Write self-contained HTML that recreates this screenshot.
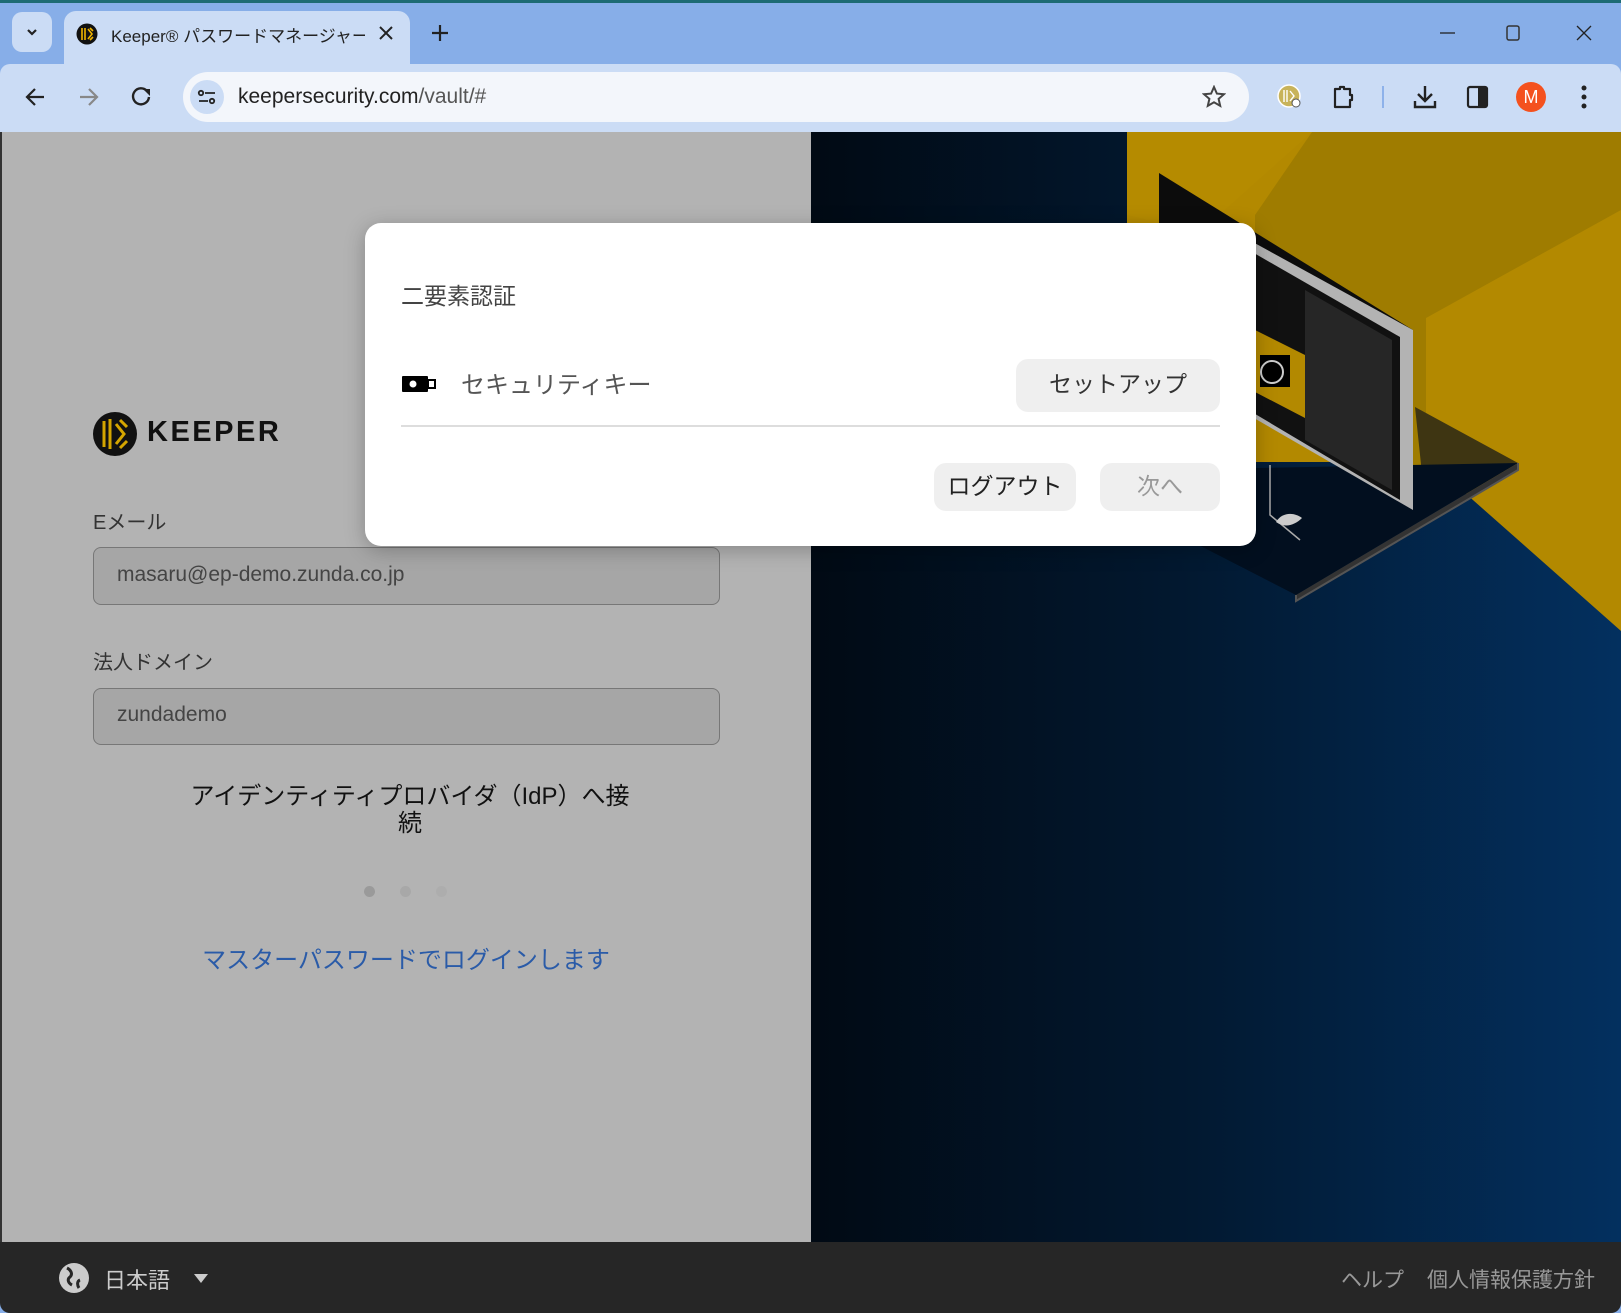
<!DOCTYPE html>
<html><head><meta charset="utf-8"><style>
*{margin:0;padding:0;box-sizing:border-box}
body{width:1621px;height:1313px;overflow:hidden;background:#87aee8;font-family:"Liberation Sans","Noto Sans CJK JP",sans-serif;position:relative}
.abs{position:absolute}
.jp{font-family:"Liberation Sans","Noto Sans CJK JP",sans-serif}
</style></head><body>
<!-- tab bar -->
<div class="abs" style="left:0;top:0;width:1621px;height:3px;background:#1d6b73"></div>
<div class="abs" style="left:0;top:3px;width:1621px;height:61px;background:#87aee8"></div>
<div class="abs" style="left:12px;top:12px;width:40px;height:40px;border-radius:10px;background:#cbdcf5"></div>
<svg class="abs" style="left:24px;top:24px" width="16" height="16"><path d="M4 6l4 4 4-4" stroke="#222" stroke-width="2.2" fill="none"/></svg>
<div class="abs" style="left:64px;top:11px;width:346px;height:60px;border-radius:12px 12px 0 0;background:#cbdcf5"></div>
<svg class="abs" style="left:76px;top:23px" width="22" height="22"><circle cx="11" cy="11" r="10.5" fill="#111"/><path d="M6 5v12M9 5v12M12 6l4 5-4 5M14 5l3 3M14 17l3-3" stroke="#f0b400" stroke-width="1.6" fill="none"/></svg>
<div class="abs jp" style="left:111px;top:22px;font-size:17px;color:#222;white-space:nowrap;width:254px;overflow:hidden">Keeper® パスワードマネージャー &amp; デ</div>
<svg class="abs" style="left:378px;top:25px" width="16" height="16"><path d="M2 2l12 12M14 2L2 14" stroke="#222" stroke-width="2"/></svg>
<svg class="abs" style="left:431px;top:24px" width="18" height="18"><path d="M9 1v16M1 9h16" stroke="#222" stroke-width="2.2"/></svg>
<svg class="abs" style="left:1440px;top:22px" width="160" height="22"><path d="M0 11h15" stroke="#222" stroke-width="1.3"/><rect x="67" y="4" width="12" height="14" rx="2" stroke="#333" stroke-width="1.5" fill="none"/><path d="M137 4l14 14M151 4l-14 14" stroke="#222" stroke-width="1.3"/></svg>
<!-- toolbar -->
<div class="abs" style="left:0;top:64px;width:1621px;height:68px;background:#cbdcf5;border-radius:10px 10px 0 0"></div>
<svg class="abs" style="left:24px;top:85px" width="140" height="24"><path d="M20 12H4M11 4l-8 8 8 8" stroke="#222" stroke-width="2.2" fill="none"/><path d="M56 12h16M65 4l8 8-8 8" stroke="#888" stroke-width="2.2" fill="none"/><path d="M123 6a8 8 0 1 0 2 6" stroke="#222" stroke-width="2.4" fill="none"/><path d="M119 4h7v7z" fill="#222"/></svg>
<div class="abs" style="left:183px;top:72px;width:1066px;height:50px;border-radius:25px;background:#f3f6fb"></div>
<div class="abs" style="left:190px;top:80px;width:34px;height:34px;border-radius:17px;background:#cbdcf5"></div>
<svg class="abs" style="left:197px;top:87px" width="20" height="20"><circle cx="4" cy="6" r="2.2" stroke="#222" stroke-width="1.8" fill="none"/><path d="M8 6h10M2 14h9" stroke="#222" stroke-width="1.8"/><circle cx="15" cy="14" r="2.2" stroke="#222" stroke-width="1.8" fill="none"/></svg>
<div class="abs" style="left:238px;top:85px;font-size:21px;color:#222">keepersecurity.com<span style="color:#555">/vault/#</span></div>
<svg class="abs" style="left:1202px;top:85px" width="24" height="24"><path d="M12 2l2.9 6.6 7.1.6-5.4 4.7 1.6 7L12 17.3 5.8 20.9l1.6-7L2 9.2l7.1-.6z" stroke="#444" stroke-width="2" fill="none"/></svg>
<svg class="abs" style="left:1277px;top:84px" width="26" height="26"><circle cx="12" cy="12" r="11" fill="#c8b35a" stroke="#fff" stroke-width="1.5"/><path d="M7 6v12M10 6v12M13 7l4 5-4 5" stroke="#fff" stroke-width="1.4" fill="none"/><circle cx="19" cy="19" r="4" fill="#fff" stroke="#555"/></svg>
<svg class="abs" style="left:1331px;top:84px" width="26" height="26"><path d="M4 5h5V3h4v2h6v6h2v5h-2v7H4z" stroke="#222" stroke-width="2.2" fill="none" stroke-linejoin="round"/></svg>
<div class="abs" style="left:1382px;top:86px;width:2px;height:22px;background:#8eb2ea"></div>
<svg class="abs" style="left:1412px;top:84px" width="26" height="26"><path d="M13 2v14M6 10l7 7 7-7M3 17v6h20v-6" stroke="#222" stroke-width="2.4" fill="none"/></svg>
<svg class="abs" style="left:1466px;top:85px" width="24" height="24"><rect x="2" y="2" width="19" height="20" rx="2" stroke="#222" stroke-width="2.2" fill="none"/><rect x="12" y="2" width="9" height="20" fill="#222"/></svg>
<div class="abs" style="left:1516px;top:82px;width:30px;height:30px;border-radius:15px;background:#f4511e;color:#fff;font-size:18px;text-align:center;line-height:30px">M</div>
<svg class="abs" style="left:1580px;top:84px" width="8" height="26"><circle cx="4" cy="4" r="2.5" fill="#222"/><circle cx="4" cy="13" r="2.5" fill="#222"/><circle cx="4" cy="22" r="2.5" fill="#222"/></svg>
<!-- content -->
<div class="abs" style="left:0;top:132px;width:811px;height:1110px;background:#b3b3b3;border-left:2px solid #333"></div>
<div class="abs" style="left:811px;top:132px;width:810px;height:1110px;background:linear-gradient(90deg,#010a14 0%,#02182f 45%,#03305f 100%)"></div>
<svg class="abs" style="left:811px;top:132px" width="810" height="1110" viewBox="811 132 810 1110">
<polygon points="1127,132 1621,132 1621,631 1430,462 1127,462" fill="#b38900"/>
<polygon points="1312,132 1621,132 1621,210 1426,318 1426,480 1255,352 1255,215" fill="#9f7c00"/>
<polygon points="1127,132 1312,132 1200,232 1127,215" fill="#b58b00"/>
<polygon points="1415,407 1518,463 1426,512" fill="#3e3512"/>
<polygon points="1150,470 1518,463 1296,595 1150,520" fill="#020f1f"/>
<polyline points="1518,463 1518,470 1296,601 1296,595" fill="#333" stroke="#555" stroke-width="2"/>
<polygon points="1159,173 1413,330 1413,510 1159,362" fill="#0c0c0c"/>
<polygon points="1240,235 1413,330 1413,510 1240,410" fill="#b3b3b3"/>
<polygon points="1240,245 1400,337 1400,500 1240,405" fill="#111"/>
<polygon points="1305,290 1392,340 1392,490 1305,440" fill="#262626"/>
<polygon points="1255,330 1305,355 1305,418 1255,392" fill="#b38900"/>
<rect x="1260" y="355" width="30" height="32" fill="#000"/>
<circle cx="1272" cy="372" r="11" fill="#000" stroke="#ccc" stroke-width="2"/>
<path d="M1270 465v50l30 25" stroke="#aaa" stroke-width="1.5" fill="none"/>
<path d="M1276 522c6-10 18-10 26-4c-8 8-18 10-26 4z" fill="#ccc"/>
</svg>
<!-- left panel content -->
<svg class="abs" style="left:93px;top:412px" width="44" height="44"><circle cx="22" cy="22" r="22" fill="#111"/><path d="M11 9v26M17 7v30M23 12l8 10-8 10M27 8l7 7M27 36l7-7" stroke="#d4a500" stroke-width="3" fill="none"/></svg>
<div class="abs" style="left:147px;top:416px;font-size:29px;font-weight:bold;color:#111;letter-spacing:2.5px">KEEPER</div>
<div class="abs jp" style="left:93px;top:506px;font-size:20px;color:#333">Eメール</div>
<div class="abs" style="left:93px;top:547px;width:627px;height:58px;border:1.5px solid #777;border-radius:8px;background:#a6a6a6"></div>
<div class="abs" style="left:117px;top:563px;font-size:21px;color:#444">masaru@ep-demo.zunda.co.jp</div>
<div class="abs jp" style="left:93px;top:646px;font-size:20px;color:#333">法人ドメイン</div>
<div class="abs" style="left:93px;top:688px;width:627px;height:57px;border:1.5px solid #777;border-radius:8px;background:#a6a6a6"></div>
<div class="abs" style="left:117px;top:703px;font-size:21px;color:#444">zundademo</div>
<div class="abs jp" style="left:170px;top:783px;width:480px;text-align:center;font-size:24px;line-height:27px;color:#111">アイデンティティプロバイダ（IdP）へ接<br>続</div>
<div class="abs" style="left:364px;top:886px;width:11px;height:11px;border-radius:6px;background:#9a9a9a"></div>
<div class="abs" style="left:400px;top:886px;width:11px;height:11px;border-radius:6px;background:#a8a8a8"></div>
<div class="abs" style="left:436px;top:886px;width:11px;height:11px;border-radius:6px;background:#adadad"></div>
<div class="abs jp" style="left:100px;top:940px;width:612px;text-align:center;font-size:24px;color:#2a5ba8">マスターパスワードでログインします</div>
<!-- dialog -->
<div class="abs" style="left:365px;top:223px;width:891px;height:323px;background:#fff;border-radius:16px;box-shadow:0 4px 20px rgba(0,0,0,.25)"></div>
<div class="abs jp" style="left:401px;top:277px;font-size:23px;color:#444">二要素認証</div>
<svg class="abs" style="left:402px;top:374px" width="36" height="20"><rect x="0" y="2" width="26" height="16" rx="1" fill="#000"/><circle cx="11" cy="10" r="3.5" fill="#fff"/><rect x="25" y="5" width="9" height="10" fill="#000"/><rect x="27" y="7" width="5" height="6" fill="#fff"/></svg>
<div class="abs jp" style="left:461px;top:365px;font-size:24px;color:#555">セキュリティキー</div>
<div class="abs jp" style="left:1016px;top:359px;width:204px;height:53px;border-radius:12px;background:#efefef;font-size:23px;color:#333;text-align:center;line-height:51px">セットアップ</div>
<div class="abs" style="left:401px;top:425px;width:819px;height:2px;background:#ddd"></div>
<div class="abs jp" style="left:934px;top:463px;width:142px;height:48px;border-radius:12px;background:#efefef;font-size:23px;color:#222;text-align:center;line-height:46px">ログアウト</div>
<div class="abs jp" style="left:1100px;top:463px;width:120px;height:48px;border-radius:12px;background:#efefef;font-size:23px;color:#999;text-align:center;line-height:46px">次へ</div>
<!-- footer -->
<div class="abs" style="left:0;top:1242px;width:1621px;height:71px;background:#262626;border-radius:0 0 10px 10px"></div>
<svg class="abs" style="left:58px;top:1262px" width="32" height="32"><circle cx="16" cy="16" r="15" fill="#ccc"/><path d="M9 6c4 2 6 6 3 9c-3 2-2 6 2 8M22 18c-3 1-3 5-1 8" stroke="#262626" stroke-width="3" fill="none"/></svg>
<div class="abs jp" style="left:104px;top:1263px;font-size:22px;color:#ccc">日本語</div>
<svg class="abs" style="left:193px;top:1272px" width="16" height="12"><path d="M1 2h14l-7 9z" fill="#ccc"/></svg>
<div class="abs jp" style="left:1341px;top:1264px;font-size:21px;color:#999">ヘルプ</div>
<div class="abs jp" style="left:1427px;top:1264px;font-size:21px;color:#999">個人情報保護方針</div>
</body></html>
